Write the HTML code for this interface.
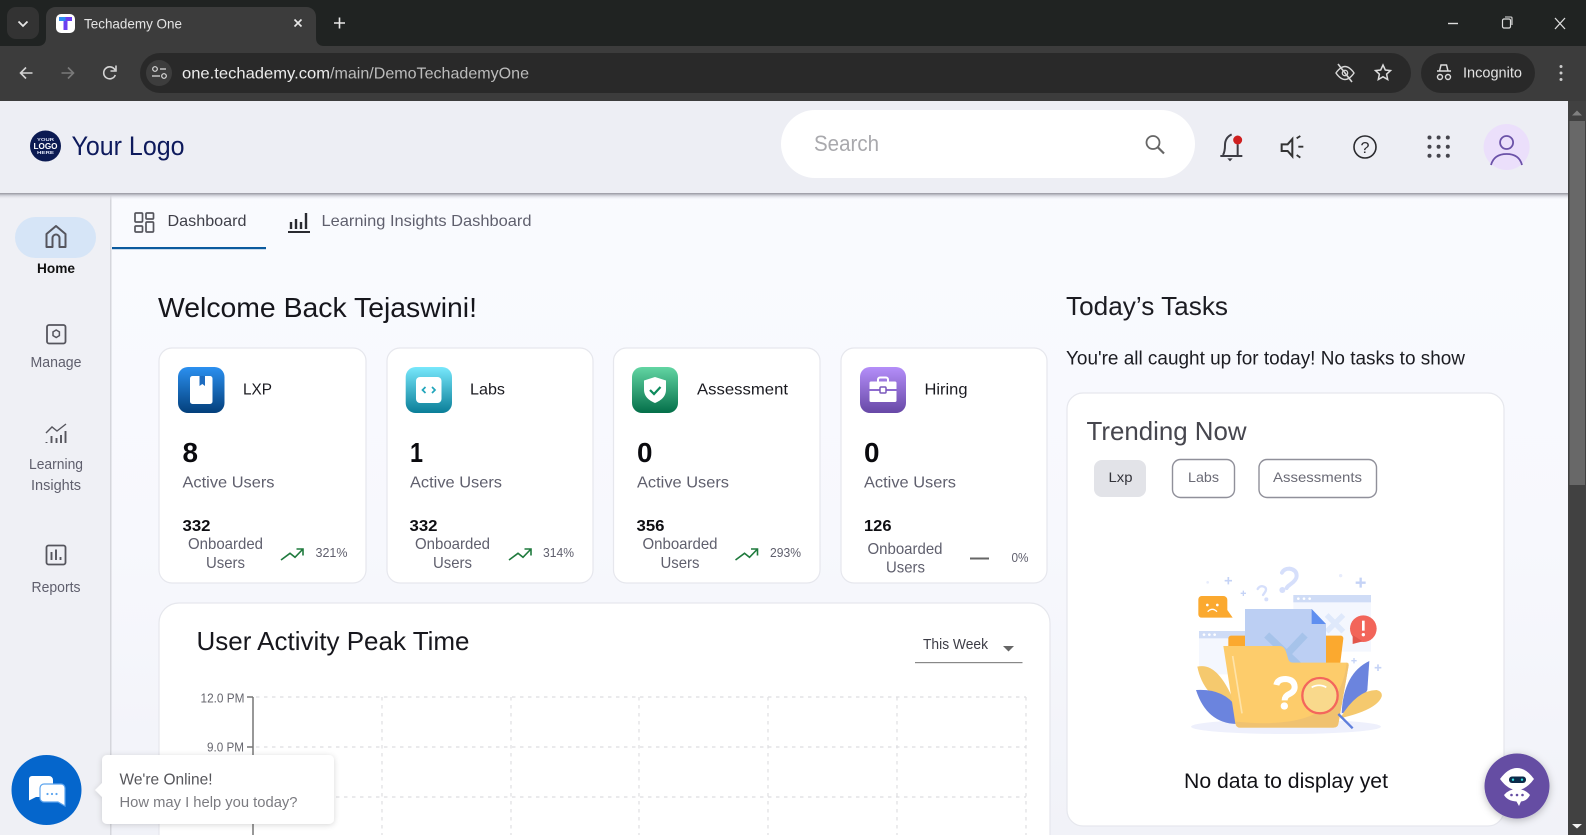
<!DOCTYPE html>
<html lang="en"><head><meta charset="utf-8"><title>Techademy One</title>
<style>
html,body{margin:0;padding:0;width:1586px;height:835px;overflow:hidden;background:#f3f4fa}
svg{display:block;filter:blur(.3px)}
text{font-family:"Liberation Sans",Arial,sans-serif}
</style></head><body>
<svg xmlns="http://www.w3.org/2000/svg" width="1586" height="835" viewBox="0 0 1586 835">
<defs>
<linearGradient id="bg" x1="0" y1="0" x2="0" y2="1"><stop offset="0" stop-color="#fafbff"/><stop offset=".6" stop-color="#f7f8fd"/><stop offset="1" stop-color="#f1f2f8"/></linearGradient>
<linearGradient id="sh" x1="0" y1="0" x2="0" y2="1"><stop offset="0" stop-color="#96969f"/><stop offset=".35" stop-color="#cfd0d8"/><stop offset="1" stop-color="#f8f9fe" stop-opacity="0"/></linearGradient>
<linearGradient id="g1" x1="0" y1="0" x2="0" y2="1"><stop offset="0" stop-color="#2b90f0"/><stop offset="1" stop-color="#033f7b"/></linearGradient>
<linearGradient id="g2" x1="0" y1="0" x2="0" y2="1"><stop offset="0" stop-color="#78e8fc"/><stop offset="1" stop-color="#0a7e98"/></linearGradient>
<linearGradient id="g3" x1="0" y1="0" x2="0" y2="1"><stop offset="0" stop-color="#62d5a3"/><stop offset="1" stop-color="#046f49"/></linearGradient>
<linearGradient id="g4" x1="0" y1="0" x2="0" y2="1"><stop offset="0" stop-color="#b48ef9"/><stop offset="1" stop-color="#6748a6"/></linearGradient>
<filter id="ds" x="-20%" y="-20%" width="140%" height="140%"><feDropShadow dx="0" dy="1" stdDeviation="3" flood-color="#000" flood-opacity=".16"/></filter>
<filter id="ds2" x="-30%" y="-30%" width="160%" height="160%"><feDropShadow dx="0" dy="2" stdDeviation="4" flood-color="#000" flood-opacity=".25"/></filter>
</defs>

<!-- browser chrome -->
<rect width="1586" height="46" fill="#202322"/>
<rect y="46" width="1586" height="56" fill="#3c3c3c"/>
<rect x="7" y="7" width="32" height="32" rx="9" fill="#333"/>
<path d="M18.500 21.500l4.500 4.500 4.500-4.500" fill="none" stroke="#e6e6e6" stroke-width="1.800"/>
<path d="M38 46h0c5 0 8-3 8-8V17c0-6 4-10 10-10h250c6 0 10 4 10 10v21c0 5 3 8 8 8z" fill="#3c3c3c"/>
<rect x="56" y="14" width="19" height="19" rx="5" fill="#fff"/>
<path d="M59 17h13v4h-4.500v9h-4v-9H59z" fill="#6b3ff0"/><path d="M59 17h6.500v4H59z" fill="#2d8cf0"/>
<text x="84" y="28.500" font-size="14" fill="#e4e4e4" textLength="98" lengthAdjust="spacingAndGlyphs">Techademy One</text>
<path d="M294.500 19.500l7 7m0-7l-7 7" stroke="#e8e8e8" stroke-width="1.600" fill="none"/>
<path d="M339.500 17.500v11m-5.500-5.500h11" stroke="#e8e8e8" stroke-width="1.600" fill="none"/>
<path d="M1448 23.500h10" stroke="#ddd" stroke-width="1.400"/>
<rect x="1502.500" y="19" width="8" height="9" rx="1.500" fill="none" stroke="#ddd" stroke-width="1.200"/><path d="M1505 17h6a1 1 0 0 1 1 1v7" fill="none" stroke="#ddd" stroke-width="1.100"/>
<path d="M1555 18l10 11m0-11l-10 11" stroke="#ddd" stroke-width="1.300" fill="none"/>
<path d="M32.500 73H20.500m5.500-5.500l-5.500 5.500 5.500 5.500" fill="none" stroke="#d4d4d4" stroke-width="1.600"/>
<path d="M61.500 73h12m-5.500-5.500l5.500 5.500-5.500 5.500" fill="none" stroke="#7a7a7a" stroke-width="1.600"/>
<path d="M115 70a6 6 0 1 0 .3 5M116 65.500v5.500h-5.500" fill="none" stroke="#d4d4d4" stroke-width="1.600"/>
<rect x="140" y="53" width="1271" height="40" rx="20" fill="#292929"/>
<circle cx="159" cy="73" r="13" fill="#3d3d3d"/>
<circle cx="155" cy="69" r="2.300" fill="none" stroke="#ddd" stroke-width="1.200"/><path d="M160 69h6m-14 7h8" stroke="#ddd" stroke-width="1.200"/><circle cx="164" cy="76" r="2.300" fill="none" stroke="#ddd" stroke-width="1.200"/>
<text x="182" y="78.500" font-size="16" fill="#ececec" textLength="148" lengthAdjust="spacingAndGlyphs">one.techademy.com</text>
<text x="330" y="78.500" font-size="16" fill="#bcbcbc" textLength="199" lengthAdjust="spacingAndGlyphs">/main/DemoTechademyOne</text>
<path d="M1336 73s4-6.500 9-6.500 9 6.500 9 6.500-4 6.500-9 6.500-9-6.500-9-6.500z" fill="none" stroke="#d6d6d6" stroke-width="1.400"/><circle cx="1345" cy="73" r="2.700" fill="none" stroke="#d6d6d6" stroke-width="1.300"/><path d="M1338 64l14 18" stroke="#d6d6d6" stroke-width="1.600"/>
<path d="M1383 65l2.300 5 5.200.6-3.900 3.600 1.100 5.300-4.700-2.700-4.700 2.700 1.100-5.300-3.900-3.600 5.200-.6z" fill="none" stroke="#dcdcdc" stroke-width="1.500"/>
<rect x="1421" y="53" width="114" height="40" rx="20" fill="#292929"/>
<path d="M1437 71h14m-11.500 0l1.500-6h5.500l1.500 6" fill="none" stroke="#dcdcdc" stroke-width="1.500"/><circle cx="1440" cy="77" r="2.500" fill="none" stroke="#dcdcdc" stroke-width="1.400"/><circle cx="1448" cy="77" r="2.500" fill="none" stroke="#dcdcdc" stroke-width="1.400"/>
<text x="1463" y="77.500" font-size="14.500" fill="#e2e2e2" textLength="59" lengthAdjust="spacingAndGlyphs">Incognito</text>
<circle cx="1561" cy="66.500" r="1.500" fill="#ccc"/><circle cx="1561" cy="73" r="1.500" fill="#ccc"/><circle cx="1561" cy="79.500" r="1.500" fill="#ccc"/>

<!-- page bg -->
<rect x="0" y="101" width="1568" height="734" fill="url(#bg)"/>
<rect x="0" y="193" width="111" height="642" fill="#eff0f5"/>
<rect x="110" y="193" width="1.500" height="642" fill="#d5d6dc"/>
<!-- header -->
<rect x="0" y="101" width="1568" height="92" fill="#edeef4"/>
<rect x="0" y="193" width="1568" height="7" fill="url(#sh)"/>
<circle cx="45.500" cy="146" r="15.500" fill="#0b1a52"/>
<text x="37" y="141" font-size="4.500" font-weight="700" fill="#dfe4f6" textLength="17" lengthAdjust="spacingAndGlyphs">YOUR</text>
<text x="33.500" y="149" font-size="8" font-weight="700" fill="#fff" textLength="24" lengthAdjust="spacingAndGlyphs">LOGO</text>
<text x="37" y="154" font-size="4.500" font-weight="700" fill="#dfe4f6" textLength="17" lengthAdjust="spacingAndGlyphs">HERE</text>
<text x="71.500" y="155" font-size="26.500" fill="#0e1a5c" textLength="113" lengthAdjust="spacingAndGlyphs">Your Logo</text>
<rect x="781" y="110" width="414" height="68" rx="34" fill="#fff"/>
<text x="814" y="151" font-size="22" fill="#a9a9ad" textLength="65" lengthAdjust="spacingAndGlyphs">Search</text>
<circle cx="1153" cy="142.500" r="6.500" fill="none" stroke="#666" stroke-width="1.800"/><path d="M1158 147.500l6 6" stroke="#666" stroke-width="2.200"/>
<g transform="translate(1215 125) scale(.3333)">
<path d="M16 93H82M24 90Q30 80 30 60Q30 38 50 28M68 90V58" fill="none" stroke="#3c3c44" stroke-width="6"/>
<path d="M37 100h16l-8 9z" fill="#3c3c44"/>
<circle cx="68" cy="45" r="13.500" fill="#cf1f1f"/>
<path d="M200 58H218L232 42V94L218 78H200Z" fill="none" stroke="#333" stroke-width="6"/>
<path d="M245 40l11-7M250 65h15M245 90l11 8" stroke="#333" stroke-width="5.500" fill="none"/>
</g>
<circle cx="1365" cy="147" r="11" fill="none" stroke="#2a2a2e" stroke-width="1.600"/>
<text x="1360.500" y="153" font-size="16" fill="#2a2a2e" textLength="9" lengthAdjust="spacingAndGlyphs">?</text>
<g fill="#44444c"><circle cx="1429.500" cy="137.500" r="2"/><circle cx="1438.600" cy="137.500" r="2"/><circle cx="1447.800" cy="137.500" r="2"/><circle cx="1429.500" cy="146.700" r="2"/><circle cx="1438.600" cy="146.700" r="2"/><circle cx="1447.800" cy="146.700" r="2"/><circle cx="1429.500" cy="155.800" r="2"/><circle cx="1438.600" cy="155.800" r="2"/><circle cx="1447.800" cy="155.800" r="2"/></g>
<circle cx="1506.600" cy="147" r="23" fill="#ebdffb"/>
<circle cx="1506.600" cy="142.500" r="6.500" fill="none" stroke="#6b52a8" stroke-width="1.800"/>
<path d="M1491 165Q1494 154 1506.600 154T1522 165" fill="none" stroke="#6b52a8" stroke-width="1.800"/>

<!-- sidebar -->
<rect x="15" y="217" width="81" height="41" rx="20.500" fill="#d6e5f7"/>
<path d="M46.500 247v-13l9.500-8 9.500 8v13h-6v-9a3.500 3.500 0 0 0-7 0v9z" fill="none" stroke="#55555d" stroke-width="2" stroke-linejoin="round"/>
<text x="37" y="273" font-size="14" font-weight="700" fill="#111" textLength="38" lengthAdjust="spacingAndGlyphs">Home</text>
<rect x="47" y="325" width="18.500" height="18.500" rx="2" fill="none" stroke="#55555d" stroke-width="1.800"/>
<path d="M56.200 330l3.200 1.900v3.700l-3.200 1.900-3.200-1.900v-3.700z" fill="none" stroke="#55555d" stroke-width="1.500"/>
<text x="30.500" y="367" font-size="14.500" fill="#5f5f6d" textLength="51" lengthAdjust="spacingAndGlyphs">Manage</text>
<path d="M46 433l6-6 5 4 9-7" fill="none" stroke="#55555d" stroke-width="1.400"/>
<path d="M46.500 442v1M51.500 436v7M56.500 438v5M61 435v8M65.500 431v12" stroke="#55555d" stroke-width="1.900"/>
<text x="29" y="469" font-size="14.500" fill="#5f5f6d" textLength="54" lengthAdjust="spacingAndGlyphs">Learning</text>
<text x="31" y="490" font-size="14.500" fill="#5f5f6d" textLength="50" lengthAdjust="spacingAndGlyphs">Insights</text>
<rect x="46.500" y="545.500" width="19" height="19" rx="2" fill="none" stroke="#55555d" stroke-width="1.800"/>
<path d="M51.500 552v8M56 549.500v10.500M60.500 557v3" stroke="#55555d" stroke-width="1.900"/>
<text x="31.500" y="592" font-size="14.500" fill="#5f5f6d" textLength="49" lengthAdjust="spacingAndGlyphs">Reports</text>

<!-- tabs -->
<rect x="112" y="247" width="154" height="2.200" fill="#0b5a9e"/>
<g fill="none" stroke="#55555d" stroke-width="1.700"><rect x="135" y="213" width="7.500" height="9" rx="1"/><rect x="146" y="213" width="7.500" height="6" rx="1"/><rect x="135" y="226" width="7.500" height="6" rx="1"/><rect x="146" y="222" width="7.500" height="10" rx="1"/></g>
<text x="167.500" y="226" font-size="16" fill="#3f3f48" textLength="79" lengthAdjust="spacingAndGlyphs">Dashboard</text>
<path d="M291 222v7M296 219v10M301 222v7M306 213v16" stroke="#2a2a30" stroke-width="2.400"/><path d="M288 232h22" stroke="#2a2a30" stroke-width="2"/>
<text x="321.500" y="226" font-size="16" fill="#5f5f6d" textLength="210" lengthAdjust="spacingAndGlyphs">Learning Insights Dashboard</text>

<!-- headings -->
<text x="158" y="317" font-size="28" fill="#16161c" textLength="319" lengthAdjust="spacingAndGlyphs">Welcome Back Tejaswini!</text>
<text x="1066" y="315" font-size="26" fill="#1c1c22" textLength="162" lengthAdjust="spacingAndGlyphs">Today’s Tasks</text>
<text x="1066" y="364.500" font-size="19" fill="#1c1c22" textLength="399" lengthAdjust="spacingAndGlyphs">You're all caught up for today! No tasks to show</text>

<!-- cards -->
<g fill="#fff" stroke="#e6e7ed" stroke-width="1.200">
<rect x="159" y="348" width="207" height="235" rx="13"/>
<rect x="387" y="348" width="206" height="235" rx="13"/>
<rect x="613.500" y="348" width="206.500" height="235" rx="13"/>
<rect x="841" y="348" width="206" height="235" rx="13"/>
</g>
<!-- card 1 -->
<rect x="178" y="367" width="46.500" height="46" rx="10" fill="url(#g1)"/>
<rect x="190" y="376" width="22.500" height="28" rx="2.500" fill="#fff"/><path d="M199.500 376h5.500v10l-2.700-2-2.800 2z" fill="#1e6cc0"/>
<text x="243" y="394.500" font-size="16" fill="#1a1a20" textLength="29" lengthAdjust="spacingAndGlyphs">LXP</text>
<text x="182.500" y="462" font-size="28" font-weight="700" fill="#0a0a0e" textLength="15.500" lengthAdjust="spacingAndGlyphs">8</text>
<text x="182.500" y="487.500" font-size="16" fill="#5f5f6d" textLength="92" lengthAdjust="spacingAndGlyphs">Active Users</text>
<text x="182.500" y="531" font-size="16" font-weight="700" fill="#0e0e12" textLength="28" lengthAdjust="spacingAndGlyphs">332</text>
<text x="188" y="549" font-size="16" fill="#5f5f6d" textLength="75" lengthAdjust="spacingAndGlyphs">Onboarded</text>
<text x="206" y="568" font-size="16" fill="#5f5f6d" textLength="39" lengthAdjust="spacingAndGlyphs">Users</text>
<path d="M281 560l9-6.700 5 4 8-8.300m-6.500 0h6.500v6.500" fill="none" stroke="#1f7a3d" stroke-width="1.600"/>
<text x="315.500" y="557" font-size="12.500" fill="#5f5f6d" textLength="32" lengthAdjust="spacingAndGlyphs">321%</text>
<!-- card 2 -->
<rect x="405.700" y="367" width="46.300" height="46" rx="10" fill="url(#g2)"/>
<rect x="416" y="377" width="25.500" height="26" rx="4" fill="#fff"/>
<path d="M425.500 387l-3 3 3 3M432 387l3 3-3 3" fill="none" stroke="#21a5bb" stroke-width="1.700"/>
<text x="470" y="394.500" font-size="16" fill="#1a1a20" textLength="35" lengthAdjust="spacingAndGlyphs">Labs</text>
<text x="410" y="462" font-size="28" font-weight="700" fill="#0a0a0e" textLength="13" lengthAdjust="spacingAndGlyphs">1</text>
<text x="410" y="487.500" font-size="16" fill="#5f5f6d" textLength="92" lengthAdjust="spacingAndGlyphs">Active Users</text>
<text x="409.500" y="531" font-size="16" font-weight="700" fill="#0e0e12" textLength="28" lengthAdjust="spacingAndGlyphs">332</text>
<text x="415" y="549" font-size="16" fill="#5f5f6d" textLength="75" lengthAdjust="spacingAndGlyphs">Onboarded</text>
<text x="433" y="568" font-size="16" fill="#5f5f6d" textLength="39" lengthAdjust="spacingAndGlyphs">Users</text>
<path d="M509 560l9-6.700 5 4 8-8.300m-6.500 0h6.500v6.500" fill="none" stroke="#1f7a3d" stroke-width="1.600"/>
<text x="543" y="557" font-size="12.500" fill="#5f5f6d" textLength="31" lengthAdjust="spacingAndGlyphs">314%</text>
<!-- card 3 -->
<rect x="632" y="367" width="46" height="46" rx="10" fill="url(#g3)"/>
<path d="M655 377l11 3.500v9c0 7-5 11-11 13.500-6-2.500-11-6.500-11-13.500v-9z" fill="#fff"/>
<path d="M650 390l4 4 6.500-7" fill="none" stroke="#0d8a5c" stroke-width="2.200"/>
<text x="697" y="394.500" font-size="16" fill="#1a1a20" textLength="91" lengthAdjust="spacingAndGlyphs">Assessment</text>
<text x="637" y="462" font-size="28" font-weight="700" fill="#0a0a0e" textLength="15.500" lengthAdjust="spacingAndGlyphs">0</text>
<text x="637" y="487.500" font-size="16" fill="#5f5f6d" textLength="92" lengthAdjust="spacingAndGlyphs">Active Users</text>
<text x="636.500" y="531" font-size="16" font-weight="700" fill="#0e0e12" textLength="28" lengthAdjust="spacingAndGlyphs">356</text>
<text x="642.500" y="549" font-size="16" fill="#5f5f6d" textLength="75" lengthAdjust="spacingAndGlyphs">Onboarded</text>
<text x="660.500" y="568" font-size="16" fill="#5f5f6d" textLength="39" lengthAdjust="spacingAndGlyphs">Users</text>
<path d="M735.500 560l9-6.700 5 4 8-8.300m-6.500 0h6.500v6.500" fill="none" stroke="#1f7a3d" stroke-width="1.600"/>
<text x="770" y="557" font-size="12.500" fill="#5f5f6d" textLength="31" lengthAdjust="spacingAndGlyphs">293%</text>
<!-- card 4 -->
<rect x="860" y="367" width="46" height="46" rx="10" fill="url(#g4)"/>
<path d="M878 382v-2.500a2 2 0 0 1 2-2h6a2 2 0 0 1 2 2v2.500" fill="none" stroke="#fff" stroke-width="2"/>
<path d="M871 381.500h24a1.500 1.500 0 0 1 1.500 1.500v6h-27v-6a1.500 1.500 0 0 1 1.500-1.500zM869.500 391h27v9.500a1.500 1.500 0 0 1-1.500 1.500h-24a1.500 1.500 0 0 1-1.500-1.500z" fill="#fff"/>
<rect x="880" y="387" width="6" height="6" rx="1" fill="#fff" stroke="#7a58bb" stroke-width="1.500"/>
<text x="924.500" y="394.500" font-size="16" fill="#1a1a20" textLength="43" lengthAdjust="spacingAndGlyphs">Hiring</text>
<text x="864" y="462" font-size="28" font-weight="700" fill="#0a0a0e" textLength="15.500" lengthAdjust="spacingAndGlyphs">0</text>
<text x="864" y="487.500" font-size="16" fill="#5f5f6d" textLength="92" lengthAdjust="spacingAndGlyphs">Active Users</text>
<text x="864" y="531" font-size="16" font-weight="700" fill="#0e0e12" textLength="27.500" lengthAdjust="spacingAndGlyphs">126</text>
<text x="867.500" y="554" font-size="16" fill="#5f5f6d" textLength="75" lengthAdjust="spacingAndGlyphs">Onboarded</text>
<text x="886" y="572.500" font-size="16" fill="#5f5f6d" textLength="39" lengthAdjust="spacingAndGlyphs">Users</text>
<rect x="970" y="557.500" width="19" height="2" fill="#666"/>
<text x="1011.500" y="562" font-size="12.500" fill="#5f5f6d" textLength="17" lengthAdjust="spacingAndGlyphs">0%</text>

<!-- activity card -->
<rect x="159" y="603" width="891" height="260" rx="20" fill="#fff" stroke="#e6e7ed" stroke-width="1.200"/>
<text x="196.500" y="650" font-size="26" fill="#17171d" textLength="273" lengthAdjust="spacingAndGlyphs">User Activity Peak Time</text>
<text x="923" y="649" font-size="14.500" fill="#3d3d46" textLength="65" lengthAdjust="spacingAndGlyphs">This Week</text>
<path d="M1003 646h11l-5.500 5.500z" fill="#666"/>
<rect x="915" y="662" width="107.500" height="1.200" fill="#888"/>
<g stroke="#dedee1" stroke-width="1.200" stroke-dasharray="3.500 4.500" fill="none">
<path d="M256 697H1026M256 747H1026M256 797H1026"/>
<path d="M382 697V835M511 697V835M639 697V835M768 697V835M897 697V835M1026 697V835"/>
</g>
<path d="M253 697V835M247 697h6M247 747h6M247 797h6" fill="none" stroke="#777" stroke-width="1.500"/>
<text x="200.500" y="702.500" font-size="12.500" fill="#66666e" textLength="44" lengthAdjust="spacingAndGlyphs">12.0 PM</text>
<text x="207" y="751.500" font-size="12.500" fill="#66666e" textLength="37" lengthAdjust="spacingAndGlyphs">9.0 PM</text>

<!-- trending card -->
<rect x="1067" y="393" width="437" height="433" rx="16" fill="#fff" stroke="#e6e7ed" stroke-width="1.200"/>
<text x="1086.500" y="440" font-size="26" fill="#46464e" textLength="160" lengthAdjust="spacingAndGlyphs">Trending Now</text>
<rect x="1094" y="460" width="52" height="37" rx="8" fill="#e2e3e8"/>
<text x="1108.500" y="482" font-size="14" fill="#33333a" textLength="24" lengthAdjust="spacingAndGlyphs">Lxp</text>
<rect x="1172.500" y="459.500" width="62" height="38" rx="8" fill="#fff" stroke="#90909a" stroke-width="1.400"/>
<text x="1188" y="482" font-size="14" fill="#6b6b76" textLength="31" lengthAdjust="spacingAndGlyphs">Labs</text>
<rect x="1259" y="459.500" width="117.500" height="38" rx="8" fill="#fff" stroke="#90909a" stroke-width="1.400"/>
<text x="1273" y="482" font-size="14" fill="#6b6b76" textLength="89" lengthAdjust="spacingAndGlyphs">Assessments</text>

<!-- illustration -->
<g transform="translate(1160 550) scale(.33333)">
<ellipse cx="378" cy="530" rx="285" ry="22" fill="#eef0fc"/>
<rect x="400" y="135" width="233" height="170" fill="#f4f7fe"/><rect x="400" y="135" width="233" height="22" fill="#cfdcf6"/>
<g fill="#fff"><circle cx="415" cy="146" r="4"/><circle cx="432" cy="146" r="4"/><circle cx="449" cy="146" r="4"/></g>
<path d="M500 195l50 50m0-50l-50 50" stroke="#dfe9fb" stroke-width="16"/>
<rect x="117" y="243" width="150" height="130" fill="#f4f7fe"/><rect x="117" y="243" width="150" height="22" fill="#cfdcf6"/>
<g fill="#fff"><circle cx="132" cy="254" r="4"/><circle cx="148" cy="254" r="4"/><circle cx="164" cy="254" r="4"/></g>
<path d="M125 138h65a12 12 0 0 1 12 12v30l16 23H125a10 10 0 0 1-10-10v-45a10 10 0 0 1 10-10z" fill="#fba92f"/>
<circle cx="142" cy="165" r="4" fill="#fff"/><circle cx="172" cy="165" r="4" fill="#fff"/><path d="M143 185q14-14 28 0" fill="none" stroke="#fff" stroke-width="4"/>
<circle cx="610" cy="236" r="40" fill="#f2655a"/><path d="M578 255v27l30-8z" fill="#e2564c"/>
<path d="M610 212v30" stroke="#fff" stroke-width="8"/><circle cx="610" cy="254" r="5" fill="#fff"/>
<g fill="none" stroke="#c5d3f6" stroke-width="5"><path d="M205 81v22M194 92h22"/><path d="M250 122v16M242 130h16" stroke-width="4"/><path d="M602 83v30M587 98h30" stroke-width="7"/><path d="M654 343v20M644 353h20"/><path d="M582 324v16M574 332h16" stroke-width="4"/></g>
<g fill="none" stroke="#d6dffb" stroke-linecap="round"><path d="M366 68q6-12 22-12 22 3 22 22 0 12-20 26-8 5-10 10" stroke-width="12"/><path d="M293 117q6-10 16-8 12 3 8 14-4 7-8 12" stroke-width="7"/></g>
<circle cx="367" cy="120" r="9" fill="#d6dffb"/><circle cx="319" cy="148" r="6" fill="#d6dffb"/>
<circle cx="143" cy="97" r="4" fill="#e7ecfc"/><circle cx="542" cy="77" r="5" fill="#e7ecfc"/>
<path d="M112 350Q170 335 218 445L215 470Q130 440 112 350Z" fill="#f5c96e"/>
<path d="M108 420Q190 415 228 470L230 522Q140 520 108 420Z" fill="#6b84de"/>
<path d="M628 333L622 420Q590 480 545 490Q550 370 628 333Z" fill="#6b84de"/>
<path d="M665 440Q650 480 540 505Q590 420 650 420Q668 425 665 440Z" fill="#f5c96e"/>
<rect x="205" y="257" width="60" height="50" rx="8" fill="#fba92f"/>
<path d="M490 257h52a8 8 0 0 1 8 9l-10 80h-50z" fill="#fba92f"/>
<path d="M255 177H455L498 222V345H255Z" fill="#bccff3"/>
<path d="M455 177L498 222H455Z" fill="#5f8ff0"/>
<path d="M320 255l95 90M435 255l-85 90" stroke="#a6c3ea" stroke-width="22"/>
<path d="M190 288H360Q372 288 378 305L385 328Q388 338 400 338H560Q567 338 566 346L535 522Q533 533 520 533H240Q228 533 226 520Z" fill="#fdcc6b"/>
<path d="M566 346L535 522Q533 533 520 533H240Q228 533 227 515Q420 535 500 470Q552 420 560 338Z" fill="#f0c270"/>
<path d="M218 318l28 172" stroke="#fee3a8" stroke-width="5"/>
<path d="M349 405q4-18 28-18 26 2 27 24 0 14-18 22-12 6-12 18" fill="none" stroke="#fff" stroke-width="18"/><circle cx="373" cy="468" r="11" fill="#fff"/>
<path d="M535 492l43 43" stroke="#5f7fdc" stroke-width="7"/>
<circle cx="480" cy="437" r="53" fill="#f9d98c" stroke="#f4665c" stroke-width="7"/>
<path d="M455 412q22-12 44 0" fill="none" stroke="#fff" stroke-width="5"/>
</g>
<text x="1184" y="788" font-size="21.500" fill="#111116" textLength="204" lengthAdjust="spacingAndGlyphs">No data to display yet</text>

<!-- chat widget -->
<circle cx="46.500" cy="790" r="35" fill="#0566cc"/>
<path d="M32 776h17a4 4 0 0 1 4 4v13a4 4 0 0 1-4 4H36l-7 3.500V779a3 3 0 0 1 3-3z" fill="#fff"/>
<path d="M44 784h17a4 4 0 0 1 4 4v18l-7-4H44a4 4 0 0 1-4-4v-10a4 4 0 0 1 4-4z" fill="#fff" stroke="#5ca4ee" stroke-width="1.200"/>
<g fill="#5ca4ee"><circle cx="47.500" cy="794" r="1.100"/><circle cx="52" cy="794" r="1.100"/><circle cx="56.500" cy="794" r="1.100"/></g>
<g filter="url(#ds)"><path d="M102 760a5 5 0 0 1 5-5h222a5 5 0 0 1 5 5v59a5 5 0 0 1-5 5H107a5 5 0 0 1-5-5v-22l-7-7 7-7z" fill="#fff"/></g>
<text x="119.500" y="784.500" font-size="16" fill="#55555a" textLength="93" lengthAdjust="spacingAndGlyphs">We're Online!</text>
<text x="119.500" y="807" font-size="15" fill="#7b7b80" textLength="178" lengthAdjust="spacingAndGlyphs">How may I help you today?</text>

<!-- bot -->
<circle cx="1517" cy="786" r="32.500" fill="#654ea3" filter="url(#ds2)"/>
<path d="M1500 779q8-11 17-11t17 11q-8 11-17 11t-17-11z" fill="#fff"/>
<rect x="1509" y="776.500" width="17" height="6.500" rx="3" fill="#0c2a4a"/><circle cx="1513" cy="779.700" r="1.200" fill="#35e0e0"/><circle cx="1522" cy="779.700" r="1.200" fill="#35e0e0"/>
<path d="M1504 795q5-6 13-6t13 6q-3 6-9 6.500l-2 4.500-2.500-4.500q-9-.5-12.500-6.500z" fill="#fff"/>
<g fill="#654ea3"><circle cx="1511.500" cy="795" r="1.300"/><circle cx="1517" cy="795" r="1.300"/><circle cx="1522.500" cy="795" r="1.300"/></g>

<!-- scrollbar -->
<rect x="1568" y="101" width="18" height="734" fill="#414141"/>
<rect x="1569.500" y="121" width="15.500" height="364" fill="#686868"/>
<path d="M1572 115.500l5-5 5 5z" fill="#808080"/>
<path d="M1572 824h10l-5 4.500z" fill="#f2f2f2"/>
</svg>
</body></html>
